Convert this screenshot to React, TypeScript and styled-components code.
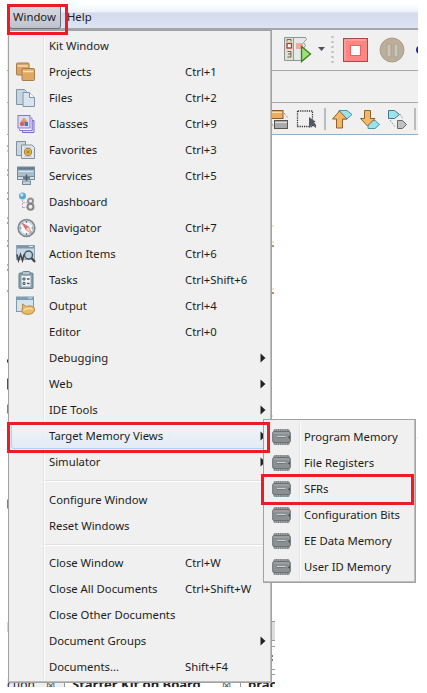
import React from "react";
import styled, { createGlobalStyle } from "styled-components";

const GlobalStyle = createGlobalStyle`
  * { box-sizing: border-box; }
  body { margin: 0; background: #fff; overflow: hidden; }
`;

const Screen = styled.div`
  position: relative;
  width: 427px;
  height: 693px;
  padding: 4px 9px 6px 7px;
  overflow: hidden;
  background: #fff;
  color: #1c1c1c;
  font-family: "Noto Sans", "Open Sans", sans-serif;
  font-size: 12px;
`;

const Ide = styled.div`
  display: flex;
  flex-direction: column;
  height: 683px;
`;

const MenuBar = styled.nav`
  display: flex;
  flex: none;
  height: 26px;
  padding-left: 2px;
  border-bottom: 2px solid #a5a6aa;
  background: linear-gradient(#fdfeff 0, #edf1f9 8px, #d4dbed 9px, #dce3f3 100%);
`;

const MenuTitle = styled.button<{ $open?: boolean }>`
  display: flex;
  align-items: center;
  height: 25px;
  width: ${(p) => (p.$open ? "52px" : "44px")};
  padding: 0 0 1px ${(p) => (p.$open ? "3px" : "6px")};
  border: ${(p) => (p.$open ? "1px solid #6b6f78" : "0")};
  border-radius: 3px;
  background: ${(p) => (p.$open ? "linear-gradient(#d9dbe1, #bfc3ce)" : "transparent")};
  font: inherit;
  font-size: 11.3px;
  color: #222;
`;

const ToolRow = styled.div<{ $h: number; $line: string; $left: number }>`
  display: flex;
  flex: none;
  align-items: center;
  height: ${(p) => p.$h}px;
  padding-left: ${(p) => p.$left}px;
  border-bottom: 1px solid ${(p) => p.$line};
  background: #f0f0f0;
  overflow: hidden;
`;

const Glyph = styled.svg`
  display: block;
  flex: none;
`;

const Editor = styled.main`
  flex: 1;
  display: flex;
  justify-content: space-between;
`;

const CodeEdge = styled.svg`
  display: block;
  flex: none;
`;

const PaneTabs = styled.footer`
  display: flex;
  flex: none;
  align-items: flex-start;
  width: 268px;
  height: 9px;
  overflow: hidden;
  background: #efefef;
  font-size: 12px;
  line-height: 13px;
  white-space: nowrap;
`;

const PaneTab = styled.div<{ $w: number; $active?: boolean; $pad: number }>`
  display: flex;
  justify-content: space-between;
  flex: none;
  width: ${(p) => p.$w}px;
  height: 20px;
  padding: 0 9px 0 ${(p) => p.$pad}px;
  border-right: 1px solid #999;
  background: ${(p) => (p.$active ? "#fff" : "#efefef")};
  font-size: ${(p) => (p.$active ? "13px" : "12px")};
  font-weight: ${(p) => (p.$active ? 700 : 400)};
  color: #222;
`;

const CloseMark = styled.span`
  font-size: 11px;
  font-weight: 400;
  color: #555;
`;

const Popup = styled.div<{ $x: number; $y: number; $w: number; $h: number; $pad: number; $rule: number }>`
  position: absolute;
  left: ${(p) => p.$x}px;
  top: ${(p) => p.$y}px;
  width: ${(p) => p.$w}px;
  height: ${(p) => p.$h}px;
  padding-top: ${(p) => p.$pad}px;
  border: 1px solid #a2a2a2;
  box-shadow: inset -1px -1px #bdbdbd;
  background: linear-gradient(90deg, #e2e2e2 1px, #fff 1px) ${(p) => p.$rule}px 2px / 2px calc(100% - 5px) no-repeat, #f0f0f0;
`;

const Item = styled.div<{ $active?: boolean }>`
  display: grid;
  grid-template-columns: 37px 136px 1fr 8px;
  align-items: center;
  height: 26px;
  margin: 0 2px;
  border: 1px solid ${(p) => (p.$active ? "#aecff7" : "transparent")};
  border-radius: 3px;
  background: ${(p) => (p.$active ? "linear-gradient(rgba(242,245,250,.8), rgba(224,234,247,.85))" : "transparent")};
  line-height: 16px;
  white-space: nowrap;
`;

const IconCell = styled.span<{ $inset: number }>`
  display: flex;
  padding-left: ${(p) => p.$inset}px;
`;

const Label = styled.span`
  font-size: 11.3px;
`;

const Separator = styled.div`
  height: 11.5px;
  margin: 0 3px 0 36px;
  background: linear-gradient(#dfdfdf 1px, #fff 1px) 0 5px / 100% 2px no-repeat;
`;

const Callout = styled.div<{ $x: number; $y: number; $w: number; $h: number }>`
  position: absolute;
  left: ${(p) => p.$x}px;
  top: ${(p) => p.$y}px;
  width: ${(p) => p.$w}px;
  height: ${(p) => p.$h}px;
  border: 3px solid #ed1c24;
`;

type IconName =
  | "projects" | "files" | "classes" | "favorites" | "services" | "dashboard"
  | "navigator" | "actions" | "tasks" | "output";

const art: Record<IconName, React.ReactNode> = {
  projects: (
    <g stroke="#a87c46">
      <rect x=".5" y="1" width="12.500" height="12" rx="1" fill="#d9a566" />
      <path d="M1.500 4h10.500" stroke="#f4dcb8" strokeWidth="1.500" />
      <rect x="6" y="6.500" width="12.500" height="12" rx="1" fill="#e0a963" />
      <path d="M7 9.500h10.500" stroke="#fbe4bf" strokeWidth="1.500" />
    </g>
  ),
  files: (
    <g stroke="#8094a6">
      <path d="M.5 1.500h8l2 2v13H.5z" fill="#c8d5e1" />
      <path d="M7 4.500h6.500l5 5v9H7z" fill="#d9e4ee" />
      <path d="M13.500 4.500v5h5" fill="#f7fbff" />
    </g>
  ),
  classes: (
    <g>
      <path d="M6.500 18.500H18V6.500h-2v10H6.500z" fill="#e5defd" stroke="#7569ca" />
      <path d="M3.500 15v1.500h12.500V4H14.500" fill="#fff" stroke="#8379d4" />
      <rect x="2" y="1.500" width="12" height="12.500" fill="#dcdcfc" stroke="#8278d0" />
      <path d="M4.500 7.500L8 3.500l3.500 4-3.500 2z" fill="#e39a63" />
      <circle cx="6" cy="10" r="2.200" fill="#d8635a" />
      <rect x="8.500" y="8" width="3.500" height="4" fill="#4e75ba" />
    </g>
  ),
  favorites: (
    <g stroke="#8190a0">
      <path d="M.5 1.500h9v14h-9z" fill="#c9d6e2" />
      <path d="M5.500 5h10.500l2.500 2.500v11h-13z" fill="#e3e8ee" />
      <path d="M8 7.500h7M8 16.500h8" stroke="#c5ced7" />
      <circle cx="12" cy="12" r="3.700" fill="#f3c962" stroke="#a27b30" />
      <path d="M12 9.500v5M9.500 12h5M10.300 10.300l3.400 3.400M13.700 10.300l-3.400 3.400" stroke="#a8781f" strokeWidth=".8" />
    </g>
  ),
  services: (
    <g stroke="#778b99">
      <rect x="1.500" y="1" width="17" height="9.500" fill="#a9bdca" />
      <path d="M2 2.500h16" stroke="#5f7d92" strokeWidth="2.500" />
      <path d="M3 5.500h14" stroke="#d9e8f0" />
      <rect x="1.500" y="10.500" width="17" height="3" fill="#d4e0e7" />
      <path d="M10.500 8.500v7M7 12h7" stroke="#485d6c" strokeWidth="1.500" />
      <rect x="6.500" y="15" width="8" height="3.500" fill="#c2d0d9" />
    </g>
  ),
  dashboard: (
    <g>
      <circle cx="6.500" cy="4" r="3.500" fill="#5aa9d1" />
      <circle cx="5.800" cy="2.800" r="1.600" fill="#b9e8fa" />
      <path d="M6.500 8v9M7 10.500h4M7 15.500h4" fill="none" stroke="#b8a9c4" strokeDasharray="2 1" />
      <circle cx="14.500" cy="9" r="2.500" fill="#eee" stroke="#929292" strokeWidth="2" />
      <circle cx="14.500" cy="14.700" r="3" fill="#e9e9e9" stroke="#858585" strokeWidth="2" />
    </g>
  ),
  navigator: (
    <g>
      <circle cx="10.500" cy="10" r="8.300" fill="#e7ecf0" stroke="#7d8993" strokeWidth="1.700" />
      <circle cx="10.500" cy="10" r="6.500" fill="#f4f7f9" stroke="#b8c1c9" />
      <path d="M10.500 3v2M10.500 15v2M3.500 10h2M15.500 10h2" stroke="#687887" />
      <path d="M5 4l7.500 4.500-3 3z" fill="#d9706c" />
      <path d="M16 16l-6.500-4.500 3-3z" fill="#f4c9c1" stroke="#c0706b" strokeWidth=".6" />
    </g>
  ),
  actions: (
    <g>
      <rect x=".5" y="1.500" width="18" height="14" fill="#c8d9e5" stroke="#91a6b7" />
      <path d="M1 3h17" stroke="#7b97aa" strokeWidth="3" />
      <path d="M13 2.500h4" stroke="#d6edf7" />
      <path d="M1 10.500l1.500 6 2-6 2 6 1.500-6" fill="none" stroke="#444" strokeWidth="1.500" />
      <circle cx="12.500" cy="11" r="4" fill="#b9d5e6" stroke="#4e565c" strokeWidth="1.500" />
      <path d="M15.500 14l3.500 4" stroke="#444" strokeWidth="2.200" />
    </g>
  ),
  tasks: (
    <g>
      <rect x="3" y="3" width="14" height="15.500" rx="1" fill="#8ba0ae" stroke="#657d8b" />
      <rect x="5.500" y="5.500" width="9" height="11" fill="#f3f6f7" />
      <rect x="6.500" y="1.500" width="7.500" height="3.500" rx="1" fill="#b7c7d0" stroke="#6f818c" />
      <path d="M7 8h2v2H7zM7 12.500h2v2H7z" fill="none" stroke="#435763" />
      <path d="M11 9h2.500M11 13.500h2.500" stroke="#435763" strokeWidth="1.500" />
    </g>
  ),
  output: (
    <g>
      <rect x=".5" y="1" width="17" height="14.500" fill="#d5e3ed" stroke="#8299ab" />
      <path d="M1 2.500h16" stroke="#7e9db3" strokeWidth="3" />
      <path d="M12 2h4" stroke="#cbe9f8" />
      <path d="M6.500 8c1.500 0 2 2 4 2.500 3-1 8-1 8 3 0 5.500-9 6-12.500 3-1-2.500 1.500-4 .5-8.500z" fill="#e9bb69" stroke="#b6833f" />
      <path d="M8 14c3-2 7-2 8.500-.5" fill="none" stroke="#ffe4ad" strokeWidth="1.300" />
    </g>
  ),
};

const Chip = () => (
  <Glyph width="19" height="18" viewBox="0 0 19 18">
    <rect x="1.500" y="1" width="16" height="16" rx="1.500" fill="#777c7f" />
    <path d="M2.500 2h14M2.500 16h14" stroke="#d7d9da" strokeWidth="1.200" strokeDasharray="1.200 1" />
    <rect x=".7" y="3.500" width="17.600" height="11" rx="1.500" fill="#8b9093" stroke="#6c7174" />
    <path d="M1.500 5h16" stroke="#a9adaf" />
    <path d="M5 8.500h8.500" stroke="#cdd0d1" />
    <path d="M5 9.500h8.500" stroke="#72787b" />
    <path d="M18 7.500l-2 1.700 2 1.700z" fill="#454c4f" />
  </Glyph>
);

const Arrow = () => (
  <Glyph width="6" height="10" viewBox="0 0 6 10"><path d="M.5 .5v9L5.500 5z" fill="#222" /></Glyph>
);

type Entry = { label: string; keys?: string; icon?: IconName; sub?: boolean; active?: boolean };

const groups: Entry[][] = [
  [
    { label: "Kit Window" },
    { label: "Projects", keys: "Ctrl+1", icon: "projects" },
    { label: "Files", keys: "Ctrl+2", icon: "files" },
    { label: "Classes", keys: "Ctrl+9", icon: "classes" },
    { label: "Favorites", keys: "Ctrl+3", icon: "favorites" },
    { label: "Services", keys: "Ctrl+5", icon: "services" },
    { label: "Dashboard", icon: "dashboard" },
    { label: "Navigator", keys: "Ctrl+7", icon: "navigator" },
    { label: "Action Items", keys: "Ctrl+6", icon: "actions" },
    { label: "Tasks", keys: "Ctrl+Shift+6", icon: "tasks" },
    { label: "Output", keys: "Ctrl+4", icon: "output" },
    { label: "Editor", keys: "Ctrl+0" },
    { label: "Debugging", sub: true },
    { label: "Web", sub: true },
    { label: "IDE Tools", sub: true },
    { label: "Target Memory Views", sub: true, active: true },
    { label: "Simulator", sub: true },
  ],
  [{ label: "Configure Window" }, { label: "Reset Windows" }],
  [
    { label: "Close Window", keys: "Ctrl+W" },
    { label: "Close All Documents", keys: "Ctrl+Shift+W" },
    { label: "Close Other Documents" },
    { label: "Document Groups", sub: true },
    { label: "Documents...", keys: "Shift+F4" },
  ],
];

const memoryViews = ["Program Memory", "File Registers", "SFRs", "Configuration Bits", "EE Data Memory", "User ID Memory"];

const DebugTools = () => (
  <Glyph width="148" height="40" viewBox="0 0 148 40">
    <path d="M1.500 18v13" stroke="#c0b6b6" />
    <path d="M14.500 7.500h21l1 2-3 3 2 3-2 3 2 4-3 3 1 3-3 2H14.500z" fill="#e6e8e9" stroke="#8b959b" />
    <rect x="15" y="8" width="8" height="22" fill="#e5dfc6" />
    <path d="M23.500 8v22" stroke="#959b9d" />
    <rect x="26" y="13" width="7" height="6" fill="#f8a69d" />
    <rect x="17" y="13.500" width="4.500" height="4.500" fill="#fff" stroke="#b53e3b" strokeWidth="1.400" />
    <path d="M17 11.500v-2h4v2M17.500 21.500h3.500v5.500h-3.500M18 24h3" fill="none" stroke="#666" />
    <path d="M31.500 16.500v15L40.500 24z" fill="#a3dd75" stroke="#38811e" strokeWidth="1.300" />
    <path d="M48 17h7l-3.500 4z" fill="#4b5360" />
    <path d="M62.500 6v28" stroke="#bdbdbd" strokeWidth="2.200" strokeDasharray="2 3" />
    <rect x="73.500" y="8.500" width="24" height="23" fill="#ff8682" stroke="#a74a4c" />
    <path d="M75 30V10h21" fill="none" stroke="#ffb5ae" />
    <rect x="80.500" y="15.500" width="10" height="10" fill="#fff" stroke="#f05e5d" />
    <circle cx="122" cy="20" r="12" fill="#bcae99" stroke="#a99d8d" />
    <path d="M117 14h4v13h-4zM124 14h4v13h-4z" fill="#cbc4ba" stroke="#aaa091" />
    <circle cx="150" cy="20" r="4" fill="#2525a0" />
  </Glyph>
);

const EditTools = () => (
  <Glyph width="148" height="30" viewBox="0 0 148 30">
    <g stroke="#8c592b">
      <rect x="-5" y="6.500" width="18" height="8" fill="#e9ae62" />
      <path d="M-4 8.500h16" stroke="#ffdba0" />
    </g>
    <rect x="4.500" y="16.500" width="13" height="8" fill="#aaa" stroke="#565656" />
    <path d="M5 18.500h12" stroke="#ddd" />
    <path d="M14 9l4 5M1 18l3 5" stroke="#777" strokeDasharray="1 1" />
    <path d="M27.500 7v15.500h15V7z" fill="none" stroke="#333" strokeWidth="1.300" strokeDasharray="1.200 1" />
    <path d="M39 13v11l3-3 4 3v-3l-2-3h2z" fill="#515962" />
    <path d="M55 4v22" stroke="#aaa" strokeWidth="1.500" />
    <path d="M69 6.500h8l5 4-5 4.500h-8z" fill="#9be3ee" stroke="#4597aa" />
    <path d="M69.500 7l7.500 8h-4.500v9h-6v-9h-4z" fill="#f0b868" stroke="#94602a" />
    <path d="M98 16.500h7l4.500 4-4.500 4h-7z" fill="#9be3ee" stroke="#4597aa" />
    <path d="M94.500 6.500h6v8h4.500l-7.500 7.500-7-7.500h4z" fill="#f0b868" stroke="#94602a" />
    <path d="M118.500 6.500h6l5 4-5 4h-6z" fill="#9be3ee" stroke="#417682" />
    <path d="M127.500 16.500h5l4 4-4 4h-5z" fill="#bfc2c4" stroke="#686b6d" />
    <path d="M120 16l5 7M130 10l3 5" stroke="#888" strokeDasharray="1 1" />
    <path d="M145 4v22" stroke="#aaa" strokeWidth="1.500" />
  </Glyph>
);

const leftMarks: [number, string][] = [
  [73, "#aaa"], [86, "#777"], [98, "#555"], [119, "#9a6b20"], [146, "#269326"], [151, "#bd9e35"],
  [170, "#269326"], [175, "#269326"], [193, "#8751b5"], [199, "#3434af"], [218, "#8751b5"],
  [223, "#3434af"], [241, "#8751b5"], [246, "#3434af"], [265, "#8751b5"], [270, "#3434af"], [291, "#5c3abc"],
];

export default function App() {
  return (
    <>
      <GlobalStyle />
      <Screen>
        <Ide>
          <MenuBar>
            <MenuTitle $open>Window</MenuTitle>
            <MenuTitle>Help</MenuTitle>
          </MenuBar>
          <ToolRow $h={41} $line="#a7a7a7" $left={263}><DebugTools /></ToolRow>
          <ToolRow $h={32} $line="#a7a7a7" $left={263} />
          <ToolRow $h={32} $line="#8dafd0" $left={263}><EditTools /></ToolRow>
          <Editor>
            <CodeEdge width="2" height="520" viewBox="0 135 2 520">
              {leftMarks.map(([y, c]) => <path key={y} d={`M0 ${y}h1`} stroke={c} />)}
              <path d="M0 361h1" stroke="#333" strokeWidth="3" />
              <path d="M0 384h1" stroke="#1d5f98" strokeWidth="11" />
              <path d="M0 409h1M0 504h1" stroke="#4b8be0" strokeWidth="9" />
              <path d="M0 622v10" stroke="#aaa" />
            </CodeEdge>
            <CodeEdge width="147" height="543" viewBox="271 135 147 543">
              <path d="M272 226h2M272 242h2M272 289h2M417 438h1" stroke="#f2cf94" />
              <path d="M272 246h2M272 293h2" stroke="#c98a6b" strokeWidth="2" />
              <path d="M271 416h2" stroke="#efa9df" />
              <rect x="271" y="621" width="4" height="19" fill="#dedede" />
              <path d="M271 621.500h4M271 640.500h4M271 646.500h4M271 669.500h4M271 674.500h4" stroke="#999" />
              <path d="M272 655v2M272 659v2" stroke="#444" strokeWidth="1.500" />
            </CodeEdge>
          </Editor>
          <PaneTabs>
            <PaneTab $w={58} $pad={0}>ction<CloseMark>⊠</CloseMark></PaneTab>
            <PaneTab $w={176} $active $pad={7}>Starter Kit on Board<CloseMark>⊠</CloseMark></PaneTab>
            <PaneTab $w={50} $active $pad={7}>prac</PaneTab>
          </PaneTabs>
        </Ide>

        <Popup $x={8} $y={30} $w={264} $h={653} $pad={2} $rule={34}>
          {groups.map((group, i) => (
            <React.Fragment key={i}>
              {i > 0 && <Separator />}
              {group.map((e) => (
                <Item key={e.label} $active={e.active}>
                  <IconCell $inset={3.5}>
                    {e.icon && <Glyph width="20" height="20" viewBox="0 0 20 20">{art[e.icon]}</Glyph>}
                  </IconCell>
                  <Label>{e.label}</Label>
                  <Label>{e.keys}</Label>
                  {e.sub && <Arrow />}
                </Item>
              ))}
            </React.Fragment>
          ))}
        </Popup>

        <Popup $x={263} $y={419} $w={153} $h={164} $pad={4} $rule={35}>
          {memoryViews.map((name) => (
            <Item key={name}>
              <IconCell $inset={5}><Chip /></IconCell>
              <Label>{name}</Label>
            </Item>
          ))}
        </Popup>

        <Callout $x={7} $y={4} $w={61} $h={31} />
        <Callout $x={7} $y={422} $w={263} $h={31} />
        <Callout $x={261} $y={474} $w={153} $h={31} />
      </Screen>
    </>
  );
}
